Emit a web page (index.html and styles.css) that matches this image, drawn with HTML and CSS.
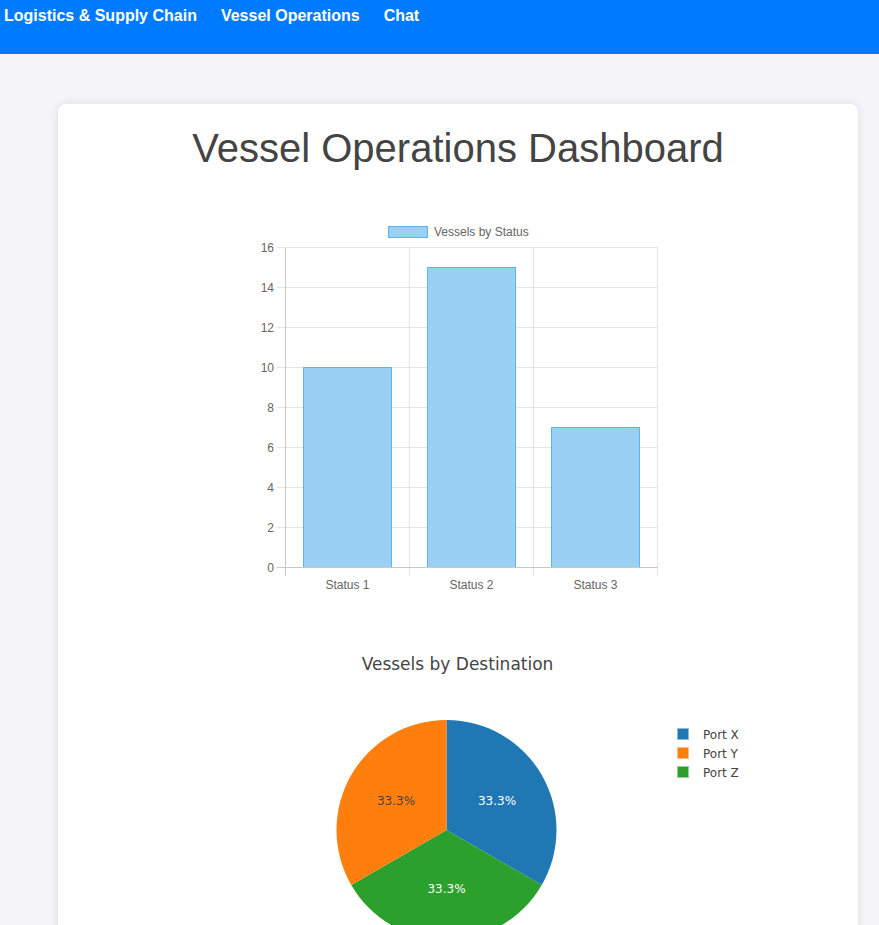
FILE: index.html
```html
<!DOCTYPE html>
<html lang="en">
<head>
<meta charset="utf-8">
<title>Vessel Operations Dashboard</title>
<link rel="stylesheet" href="styles.css">
</head>
<body>
<nav class="navbar">
  <a class="nav-link" href="#">Logistics &amp; Supply Chain</a>
  <a class="nav-link" href="#">Vessel Operations</a>
  <a class="nav-link" href="#">Chat</a>
</nav>
<main class="card">
  <h1 class="title">Vessel Operations Dashboard</h1>
  <svg class="bar-chart" width="400" height="397" viewBox="258 216 400 397" xmlns="http://www.w3.org/2000/svg">
    <!-- legend -->
    <rect class="bar" x="388" y="226" width="40" height="12"/>
    <rect class="bar-edge" x="388.5" y="226.5" width="39" height="11"/>
    <text class="chart-text" x="434" y="236">Vessels by Status</text>
    <!-- horizontal grid -->
    <g class="grid">
      <line x1="277" y1="247.5" x2="658" y2="247.5"/>
      <line x1="277" y1="287.5" x2="658" y2="287.5"/>
      <line x1="277" y1="327.5" x2="658" y2="327.5"/>
      <line x1="277" y1="367.5" x2="658" y2="367.5"/>
      <line x1="277" y1="407.5" x2="658" y2="407.5"/>
      <line x1="277" y1="447.5" x2="658" y2="447.5"/>
      <line x1="277" y1="487.5" x2="658" y2="487.5"/>
      <line x1="277" y1="527.5" x2="658" y2="527.5"/>
    </g>
    <!-- vertical grid -->
    <g class="grid">
      <line x1="409.5" y1="248" x2="409.5" y2="576"/>
      <line x1="533.5" y1="248" x2="533.5" y2="576"/>
      <line x1="657.5" y1="248" x2="657.5" y2="576"/>
    </g>
    <!-- bars -->
    <rect class="bar" x="303" y="367" width="89" height="201"/>
    <path class="bar-edge" d="M303.5 567.5 V367.5 H391.5 V567.5"/>
    <rect class="bar" x="427" y="267" width="89" height="301"/>
    <path class="bar-edge" d="M427.5 567.5 V267.5 H515.5 V567.5"/>
    <rect class="bar" x="551" y="427" width="89" height="141"/>
    <path class="bar-edge" d="M551.5 567.5 V427.5 H639.5 V567.5"/>
    <!-- axes -->
    <g class="axis">
      <line x1="285.5" y1="248" x2="285.5" y2="576"/>
      <line x1="277" y1="567.5" x2="658" y2="567.5"/>
    </g>
    <!-- y labels -->
    <g class="chart-text" text-anchor="end">
      <text x="274" y="252">16</text>
      <text x="274" y="292">14</text>
      <text x="274" y="332">12</text>
      <text x="274" y="372">10</text>
      <text x="274" y="412">8</text>
      <text x="274" y="452">6</text>
      <text x="274" y="492">4</text>
      <text x="274" y="532">2</text>
      <text x="274" y="572">0</text>
    </g>
    <!-- x labels -->
    <g class="chart-text" text-anchor="middle">
      <text x="347.5" y="589">Status 1</text>
      <text x="471.5" y="589">Status 2</text>
      <text x="595.5" y="589">Status 3</text>
    </g>
  </svg>
  <svg class="pie-chart" width="700" height="450" viewBox="108 613 700 450" xmlns="http://www.w3.org/2000/svg">
    <text class="pie-title" x="457.5" y="670" text-anchor="middle">Vessels by Destination</text>
    <path d="M446.5 830 L446.5 720 A110 110 0 0 1 541.76 885 Z" fill="#1f77b4"/>
    <path d="M446.5 830 L541.76 885 A110 110 0 0 1 351.24 885 Z" fill="#2ca02c"/>
    <path d="M446.5 830 L351.24 885 A110 110 0 0 1 446.5 720 Z" fill="#ff7f0e"/>
    <g class="pie-label" text-anchor="middle">
      <text x="497" y="805" fill="#ffffff">33.3%</text>
      <text x="396" y="805" fill="#444444">33.3%</text>
      <text x="446.5" y="893" fill="#ffffff">33.3%</text>
    </g>
    <g class="pie-legend">
      <rect x="677.5" y="728.5" width="11" height="11" fill="#1f77b4" stroke="#8fbbd9"/>
      <text x="703" y="739">Port X</text>
      <rect x="677.5" y="747.5" width="11" height="11" fill="#ff7f0e" stroke="#ffbf86"/>
      <text x="703" y="758">Port Y</text>
      <rect x="677.5" y="766.5" width="11" height="11" fill="#2ca02c" stroke="#95cf95"/>
      <text x="703" y="777">Port Z</text>
    </g>
  </svg>
</main>
</body>
</html>
```
FILE: styles.css
```css
* {
  box-sizing: border-box;
}

body {
  margin: 0;
  background: #f4f4f9;
  font-family: "Liberation Sans", Arial, sans-serif;
}

.navbar {
  display: flex;
  gap: 24px;
  height: 54px;
  padding: 7px 4px 0;
  background: #007bff;
}

.nav-link {
  color: #ffffff;
  font-weight: bold;
  font-size: 16px;
  text-decoration: none;
  line-height: 18px;
}

.card {
  display: flex;
  flex-direction: column;
  align-items: center;
  width: 800px;
  margin: 50px 0 40px 58px;
  padding: 20px;
  background: #ffffff;
  border-radius: 8px;
  box-shadow: 0 0 10px rgba(0, 0, 0, 0.1);
}

.title {
  margin: 1px 0 45px;
  font-size: 40px;
  font-weight: normal;
  line-height: 46px;
  color: #444444;
  text-align: center;
}

.bar-chart,
.pie-chart {
  display: block;
}

.bar {
  fill: #9bd0f5;
}

.bar-edge {
  fill: none;
  stroke: #5cb3ef;
  stroke-width: 1;
}

.grid line {
  stroke: #e5e5e5;
  stroke-width: 1;
}

.axis line {
  stroke: #c8c8c8;
  stroke-width: 1;
}

.chart-text {
  font-family: "Liberation Sans", Arial, sans-serif;
  font-size: 12px;
  fill: #666666;
}

.pie-title {
  font-family: "DejaVu Sans", Verdana, sans-serif;
  font-size: 17px;
  fill: #444444;
}

.pie-label {
  font-family: "DejaVu Sans", Verdana, sans-serif;
  font-size: 12px;
}

.pie-legend {
  font-family: "DejaVu Sans", Verdana, sans-serif;
  font-size: 12px;
  fill: #444444;
}
```
